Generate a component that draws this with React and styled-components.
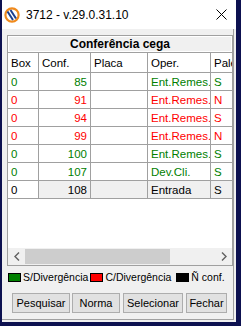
import React from 'react';
import styled, { createGlobalStyle } from 'styled-components';

const Global = createGlobalStyle`
  html, body { margin: 0; padding: 0; background: #ffffff; }
  body { font-family: "Liberation Sans", Arial, sans-serif; }
  * { box-sizing: border-box; }
`;

const Window = styled.div`
  width: 241px;
  height: 326px;
  background: #f0f0f0;
  border-left: 2px solid #0d1150;
  border-right: 5px solid #0d1150;
  border-bottom: 4px solid #0d1150;
  display: flex;
  flex-direction: column;
`;

const TitleBar = styled.div`
  height: 29px;
  flex-shrink: 0;
  background: #ffffff;
  display: flex;
  align-items: center;
  padding: 0 9px 0 2px;
`;

const TitleText = styled.span`
  font-family: "Liberation Sans", Arial, sans-serif;
  font-size: 12px;
  color: #000;
  margin-left: 6px;
  flex: 1;
`;

const Body = styled.div`
  flex: 1;
  display: flex;
  flex-direction: column;
  padding: 6px 3px 0 5px;
  border-right: 1px solid #a0a0a0;
  border-bottom: 1px solid #a0a0a0;
  margin-right: 2px;
  margin-bottom: 2px;
`;

const Frame = styled.div`
  width: 226px;
  display: flex;
  flex-direction: column;
`;

const Caption = styled.div`
  height: 18px;
  border: 1px solid #a0a0a0;
  box-shadow: inset 1px 1px 0 #ffffff, inset -1px -1px 0 #ffffff;
  background: #f0f0f0;
  font-weight: bold;
  font-size: 12px;
  color: #000;
  display: flex;
  align-items: center;
  justify-content: center;
`;

const GridBox = styled.div`
  background: #ffffff;
  border-left: 1px solid #a0a0a0;
  border-right: 1px solid #a0a0a0;
  border-bottom: 1px solid #a0a0a0;
  display: flex;
  flex-direction: column;
`;

const Viewport = styled.div`
  height: 195px;
  overflow: hidden;
`;

const Table = styled.div`
  display: grid;
  grid-template-columns: 31px 52px 57px 63px 40px;
  width: 243px;
`;

const Cell = styled.div`
  height: ${p => (p.$head ? '20px' : '18px')};
  border-right: 1px solid #a0a0a0;
  border-bottom: 1px solid #a0a0a0;
  background: ${p => p.$bg || '#ffffff'};
  color: ${p => p.$color || '#000'};
  font-size: 11.5px;
  display: flex;
  align-items: ${p => (p.$head ? 'flex-end' : 'center')};
  padding: ${p => (p.$head ? '0 3px 3px 3px' : '0 3px')};
  justify-content: ${p => (p.$right ? 'flex-end' : 'flex-start')};
  white-space: nowrap;
  overflow: hidden;
`;

const HScroll = styled.div`
  height: 17px;
  background: #f0f0f0;
  display: flex;
  align-items: center;
`;

const Arrow = styled.div`
  width: 17px;
  height: 17px;
  display: flex;
  align-items: center;
  justify-content: center;
`;

const Track = styled.div`
  flex: 1;
  height: 15px;
  display: flex;
`;

const Thumb = styled.div`
  width: 145px;
  height: 15px;
  background: #cdcdcd;
`;

const Legend = styled.div`
  display: flex;
  align-items: center;
  margin-top: 4px;
  height: 14px;
  font-size: 10.5px;
  color: #000;
  padding-left: 1px;
  white-space: nowrap;
`;

const Swatch = styled.span`
  flex-shrink: 0;
  width: 13px;
  height: 9px;
  background: ${p => p.$c};
  border: 1px solid #000;
  margin-right: 2px;
  margin-left: ${p => p.$ml || 0}px;
`;

const Buttons = styled.div`
  display: flex;
  margin-top: 9px;
  padding-left: 5px;
`;

const Button = styled.button`
  height: 20px;
  width: ${p => p.$w}px;
  margin-right: ${p => p.$mr || 0}px;
  background: #e1e1e1;
  border: 1px solid #adadad;
  font-family: "Liberation Sans", Arial, sans-serif;
  font-size: 11px;
  color: #000;
  padding: 0;
`;

const rows = [
  { box: '0', conf: '85', oper: 'Ent.Remes.', pal: 'S', c: '#008000' },
  { box: '0', conf: '91', oper: 'Ent.Remes.', pal: 'N', c: '#ff0000' },
  { box: '0', conf: '94', oper: 'Ent.Remes.', pal: 'S', c: '#ff0000' },
  { box: '0', conf: '99', oper: 'Ent.Remes.', pal: 'N', c: '#ff0000' },
  { box: '0', conf: '100', oper: 'Ent.Remes.', pal: 'S', c: '#008000' },
  { box: '0', conf: '107', oper: 'Dev.Cli.', pal: 'S', c: '#008000' },
  { box: '0', conf: '108', oper: 'Entrada', pal: 'S', c: '#000000', sel: true },
];

function Logo() {
  return (
    <svg width="16" height="16" viewBox="0 0 16 16">
      <circle cx="8" cy="8" r="6.6" fill="none" stroke="#f08a1c" strokeWidth="2.2" />
      <path d="M3.5 4.5 L9 13" stroke="#1b3f8f" strokeWidth="2" fill="none" />
      <path d="M6.5 3 L12 11.5" stroke="#1b3f8f" strokeWidth="2" fill="none" />
    </svg>
  );
}

export default function App() {
  return (
    <>
      <Global />
      <Window>
        <TitleBar>
          <Logo />
          <TitleText>3712 - v.29.0.31.10</TitleText>
          <svg width="11" height="11" viewBox="0 0 11 11">
            <path d="M0.5 0.5 L10.5 10.5 M10.5 0.5 L0.5 10.5" stroke="#000" strokeWidth="1" />
          </svg>
        </TitleBar>
        <Body>
          <Frame>
            <Caption>Conferência cega</Caption>
            <GridBox>
              <Viewport>
                <Table>
                  <Cell $head>Box</Cell>
                  <Cell $head>Conf.</Cell>
                  <Cell $head>Placa</Cell>
                  <Cell $head>Oper.</Cell>
                  <Cell $head>Palete</Cell>
                  {rows.map((r, i) => (
                    <React.Fragment key={i}>
                      <Cell $color={r.c}>{r.box}</Cell>
                      <Cell $color={r.c} $right $bg={r.sel ? '#f0f0f0' : undefined}>{r.conf}</Cell>
                      <Cell $bg={r.sel ? '#f0f0f0' : undefined}></Cell>
                      <Cell $color={r.c} $bg={r.sel ? '#f0f0f0' : undefined}>{r.oper}</Cell>
                      <Cell $color={r.c} $bg={r.sel ? '#f0f0f0' : undefined}>{r.pal}</Cell>
                    </React.Fragment>
                  ))}
                </Table>
              </Viewport>
              <HScroll>
                <Arrow>
                  <svg width="6" height="9" viewBox="0 0 6 9"><path d="M5 0.5 L1 4.5 L5 8.5" stroke="#606060" strokeWidth="1.4" fill="none" /></svg>
                </Arrow>
                <Track><Thumb /></Track>
                <Arrow>
                  <svg width="6" height="9" viewBox="0 0 6 9"><path d="M1 0.5 L5 4.5 L1 8.5" stroke="#606060" strokeWidth="1.4" fill="none" /></svg>
                </Arrow>
              </HScroll>
            </GridBox>
          </Frame>
          <Legend>
            <Swatch $c="#008000" />S/Divergência
            <Swatch $c="#ff0000" $ml={2} />C/Divergência
            <Swatch $c="#000000" $ml={5} />Ñ conf.
          </Legend>
          <Buttons>
            <Button $w={58} $mr={2}>Pesquisar</Button>
            <Button $w={48} $mr={3}>Norma</Button>
            <Button $w={60} $mr={3}>Selecionar</Button>
            <Button $w={41}>Fechar</Button>
          </Buttons>
        </Body>
      </Window>
    </>
  );
}
